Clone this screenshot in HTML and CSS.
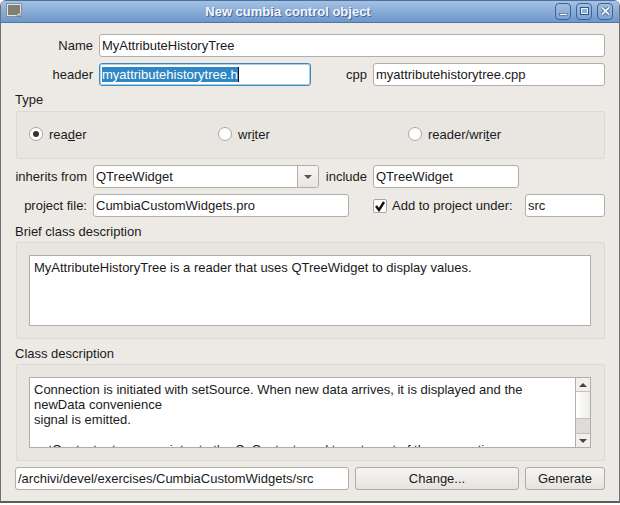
FILE: index.html
```html
<!DOCTYPE html>
<html lang="en">
<head>
    <meta charset="UTF-8">
    <meta name="viewport" content="width=device-width, initial-scale=1.0">
    <title>New cumbia control object</title>
    <link rel="stylesheet" href="styles.css">
</head>
<body>

    <div class="window">
        <div class="titlebar">
            <svg class="app-icon" width="17" height="15" viewBox="0 0 17 15">
                <rect x="0.5" y="0.5" width="15" height="13" fill="#e4e4e0" stroke="#8a8f96"/>
                <rect x="2" y="2" width="12" height="10" fill="#7f7f7a"/>
                <rect x="11" y="10" width="3" height="3" fill="#d8d8d0" stroke="#555" stroke-width="0.5"/>
            </svg>
            <span class="title">New cumbia control object</span>
            <div class="win-buttons">
                <span class="win-btn"><svg width="15" height="15" viewBox="0 0 15 15"><rect x="3.5" y="9.5" width="8" height="2" fill="#f2f5f9" stroke="#2f5688" stroke-width="0.6"/></svg></span>
                <span class="win-btn"><svg width="15" height="15" viewBox="0 0 15 15"><rect x="3.5" y="3.5" width="8" height="7" fill="none" stroke="#2f5688"/><rect x="4.5" y="4.5" width="6" height="5" fill="none" stroke="#e8eef6"/></svg></span>
                <span class="win-btn"><svg width="15" height="15" viewBox="0 0 15 15"><path d="M4 3.5l7 7M11 3.5l-7 7" stroke="#2f5688" stroke-width="3.4"/><path d="M4 3.5l7 7M11 3.5l-7 7" stroke="#eef2f7" stroke-width="2"/></svg></span>
            </div>
        </div>

        <div class="content">
            <div class="row">
                <label class="lbl lbl-top">Name</label>
                <div class="input grow">MyAttributeHistoryTree</div>
            </div>
            <div class="row">
                <label class="lbl lbl-top">header</label>
                <div class="input input-focus"><span class="selected">myattributehistorytree.h</span><span class="caret"></span></div>
                <label class="lbl lbl-cpp">cpp</label>
                <div class="input grow">myattributehistorytree.cpp</div>
            </div>

            <div class="group-title title-type">Type</div>
            <div class="group group-type">
                <div class="radio-item radio-one"><span class="radio radio-on"></span><span>rea<u>d</u>er</span></div>
                <div class="radio-item radio-two"><span class="radio"></span><span>wr<u>i</u>ter</span></div>
                <div class="radio-item"><span class="radio"></span><span>reader/wri<u>t</u>er</span></div>
            </div>

            <div class="row row-inherits">
                <label class="lbl lbl-mid">inherits from</label>
                <div class="input combo">
                    <span class="combo-text">QTreeWidget</span>
                    <span class="combo-arrow"><svg width="8" height="4" viewBox="0 0 8 4"><path d="M0 0h8L4 4z" fill="#555"/></svg></span>
                </div>
                <label class="lbl lbl-include">include</label>
                <div class="input input-include">QTreeWidget</div>
            </div>
            <div class="row">
                <label class="lbl lbl-mid">project file:</label>
                <div class="input input-project">CumbiaCustomWidgets.pro</div>
                <span class="check"><svg width="12" height="12" viewBox="0 0 12 12"><path d="M2 6l3 4 5-8" fill="none" stroke="#111" stroke-width="2.4"/></svg></span>
                <label class="lbl lbl-add">Add to project under:</label>
                <div class="input grow">src</div>
            </div>

            <div class="group-title title-brief">Brief class description</div>
            <div class="group group-text">
                <div class="textarea">MyAttributeHistoryTree is a reader that uses QTreeWidget to display values.</div>
            </div>

            <div class="group-title title-class">Class description</div>
            <div class="group group-text">
                <div class="textarea textarea-scroll">
                    <div class="textarea-body">Connection is initiated with setSource. When new data arrives, it is displayed and the<br>newData convenience<br>signal is emitted.<br><br>getContext returns a pointer to the CuContext used to get a set of the connection</div>
                    <div class="scrollbar">
                        <span class="sb-btn"><svg width="8" height="4" viewBox="0 0 8 4"><path d="M0 4h8L4 0z" fill="#444"/></svg></span>
                        <span class="sb-track"></span>
                        <span class="sb-thumb"></span>
                        <span class="sb-btn sb-btn-down"><svg width="8" height="4" viewBox="0 0 8 4"><path d="M0 0h8L4 4z" fill="#444"/></svg></span>
                    </div>
                </div>
            </div>

            <div class="row row-bottom">
                <div class="input input-project input-path">/archivi/devel/exercises/CumbiaCustomWidgets/src</div>
                <button class="btn btn-change">Change...</button>
                <button class="btn btn-generate">Generate</button>
            </div>
        </div>
    </div>

</body>
</html>
```

FILE: styles.css
```css
html, body {
    margin: 0;
    padding: 0;
    width: 620px;
    height: 505px;
    overflow: hidden;
    background-color: #fff;
}

body {
    font-family: "Liberation Sans", Arial, sans-serif;
    font-size: 13px;
    color: #1a1a1a;
}

.window {
    width: 620px;
    height: 503px;
    box-sizing: border-box;
    background-color: #edeae6;
    border: 1px solid #4e5f73;
    border-top: none;
    border-left-color: #6f6f6f;
    border-right-color: #6f6f6f;
    border-bottom: 2px solid #5c5c5c;
    border-radius: 6px 6px 0 0;
    overflow: hidden;
}

.titlebar {
    height: 23px;
    display: flex;
    align-items: center;
    padding: 0 5px 0 5px;
    box-sizing: border-box;
    background: linear-gradient(#a4c2e4, #6e97c9);
    border-top: 1px solid #4d6f9e;
    border-bottom: 1px solid #4b76ab;
}

.app-icon {
    flex: none;
    margin-bottom: 2px;
}

.title {
    flex: 1;
    text-align: center;
    font-weight: bold;
    color: #f2f6fb;
    text-shadow: 1px 1px 0 #46679a;
    margin-left: 6px;
    white-space: nowrap;
}

.win-buttons {
    display: flex;
    gap: 5px;
    margin-left: 8px;
    margin-right: 1px;
}

.win-btn {
    width: 16px;
    height: 17px;
    box-sizing: border-box;
    border: 1px solid #3f6494;
    border-radius: 4px;
    background: linear-gradient(#a3bfe0, #7ea2d0);
    display: flex;
    align-items: center;
    justify-content: center;
}

.win-btn svg {
    flex: none;
}

.content {
    padding: 11px 14px 0 14px;
}

.row {
    display: flex;
    align-items: center;
    height: 23px;
    margin-bottom: 6px;
}

.lbl {
    text-align: right;
    flex: none;
    white-space: nowrap;
}

.lbl-top {
    width: 78px;
    margin-right: 6px;
}

.lbl-mid {
    width: 72px;
    margin-right: 6px;
}

.lbl-cpp {
    width: 56px;
    margin-right: 6px;
}

.lbl-include {
    width: 48px;
    margin-right: 6px;
}

.lbl-add {
    text-align: left;
    width: 133px;
}

.input {
    height: 23px;
    box-sizing: border-box;
    background-color: #fff;
    border: 1px solid #b1ada7;
    border-radius: 3px;
    padding: 0 2px;
    line-height: 21px;
    white-space: nowrap;
    overflow: hidden;
    flex: none;
}

.grow {
    flex: 1;
}

.input-focus {
    width: 212px;
    border-color: #3f87ba;
    box-shadow: inset 0 0 0 1px #a8d0ea;
    display: flex;
    align-items: center;
}

.selected {
    background-color: #2f86c4;
    color: #fff;
    line-height: 15px;
}

.caret {
    width: 1px;
    height: 15px;
    background-color: #111;
}

.combo {
    width: 226px;
    display: flex;
    padding-right: 0;
}

.combo-text {
    flex: 1;
}

.combo-arrow {
    width: 20px;
    border-left: 1px solid #b1ada7;
    background: linear-gradient(#f7f6f4, #e9e6e2);
    display: flex;
    align-items: center;
    justify-content: center;
}

.row-inherits {
    margin-top: 6px;
}

.input-include {
    width: 146px;
}

.input-project {
    width: 256px;
}

.check {
    flex: none;
    width: 14px;
    height: 14px;
    box-sizing: border-box;
    margin-left: 24px;
    margin-right: 5px;
    background-color: #fff;
    border: 1px solid #a9a59f;
    border-radius: 2px;
    display: flex;
    align-items: center;
    justify-content: center;
}

.group-title {
    height: 15px;
    line-height: 15px;
}

.title-type {
    margin-bottom: 4px;
}

.title-brief {
    margin-top: 7px;
    margin-bottom: 3px;
}

.title-class {
    margin-top: 7px;
    margin-bottom: 3px;
}

.group {
    margin-left: 1px;
    box-sizing: border-box;
    border: 1px solid #dcd9d4;
    border-radius: 2px;
    background-color: #e9e6e2;
}

.group-type {
    height: 48px;
    display: flex;
    align-items: center;
    padding: 0 0 2px 12px;
}

.radio-item {
    display: flex;
    align-items: center;
    gap: 6px;
}

.radio-one {
    width: 189px;
}

.radio-two {
    width: 190px;
}

.radio {
    width: 14px;
    height: 14px;
    box-sizing: border-box;
    border: 1px solid #a9a59f;
    border-radius: 50%;
    background-color: #fff;
    flex: none;
    display: flex;
    align-items: center;
    justify-content: center;
}

.radio-on::after {
    content: "";
    width: 6px;
    height: 6px;
    border-radius: 50%;
    background-color: #333;
}

.group-text {
    height: 97px;
    padding: 12px 13px 0 12px;
}

.textarea {
    height: 71px;
    box-sizing: border-box;
    background-color: #fff;
    border: 1px solid #b1ada7;
    padding: 4px 4px;
    line-height: 15px;
    overflow: hidden;
}

.textarea-scroll {
    display: flex;
    padding: 0;
}

.textarea-body {
    flex: 1;
    padding: 4px 4px;
    overflow: hidden;
    white-space: nowrap;
}

.scrollbar {
    width: 14px;
    flex: none;
    border-left: 1px solid #b1ada7;
    display: flex;
    flex-direction: column;
    background: linear-gradient(90deg, #fff, #efedea);
}

.sb-btn {
    height: 13px;
    flex: none;
    display: flex;
    align-items: center;
    justify-content: center;
    border-bottom: 1px solid #c4c1bc;
    background-color: #f2f0ed;
}

.sb-btn-down {
    border-bottom: none;
    border-top: 1px solid #c4c1bc;
}

.sb-track {
    flex: 1;
}

.sb-thumb {
    height: 14px;
    flex: none;
    background-color: #dedcd8;
    border-top: 1px solid #c4c1bc;
}

.row-bottom {
    margin-top: 6px;
    margin-bottom: 0;
    gap: 6px;
}

.input-path {
    width: 334px;
}

.btn {
    height: 23px;
    box-sizing: border-box;
    font-family: inherit;
    font-size: inherit;
    color: inherit;
    padding: 0;
    border: 1px solid #aeaaa4;
    border-radius: 3px;
    background: linear-gradient(#f6f5f3, #e6e3df);
    flex: none;
}

.btn-change {
    width: 164px;
}

.btn-generate {
    width: 80px;
}
```
